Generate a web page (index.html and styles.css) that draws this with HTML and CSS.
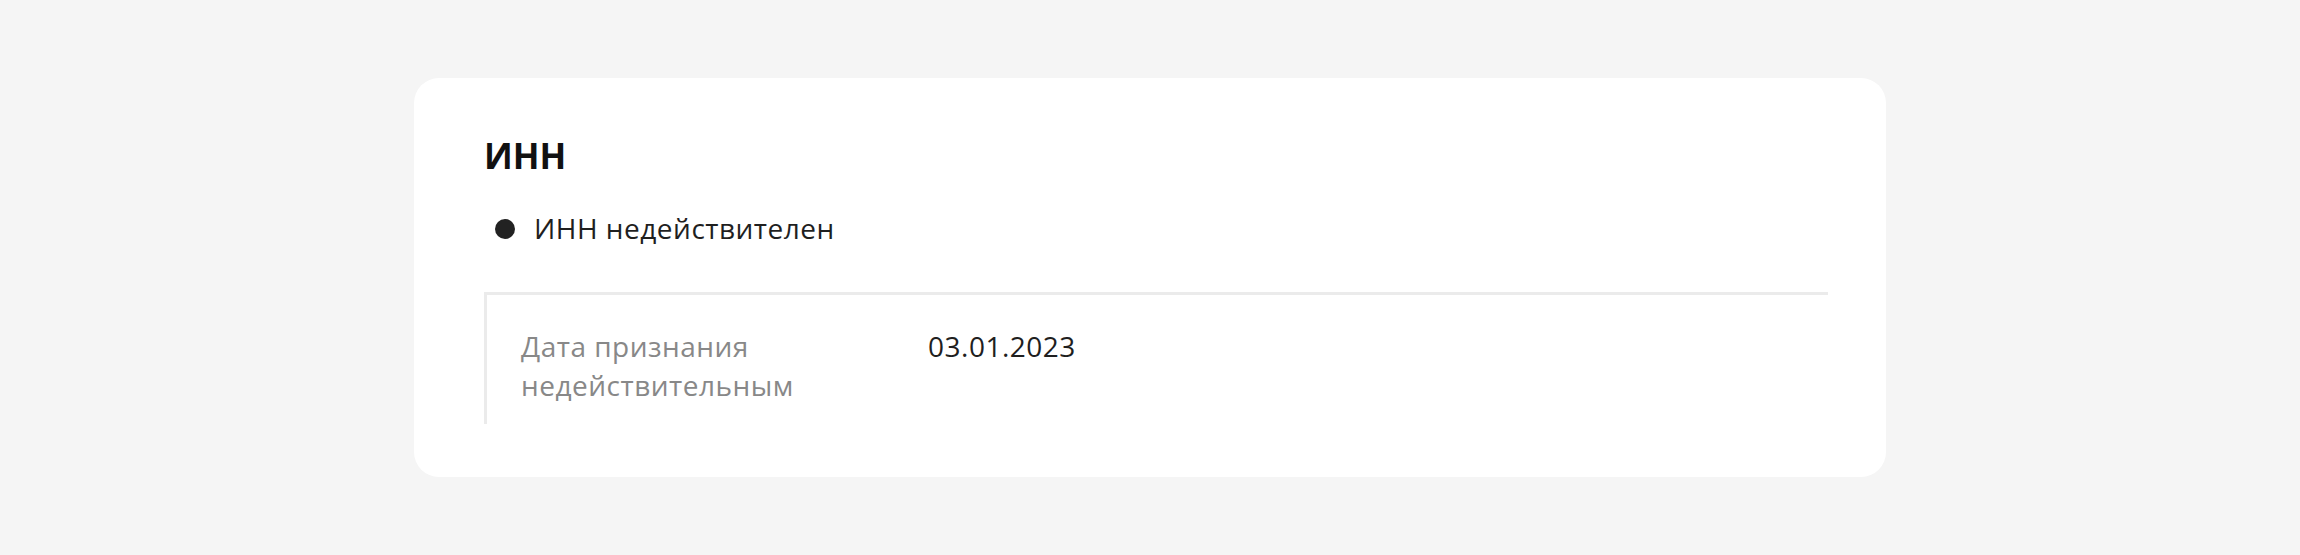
FILE: index.html
```html
<!DOCTYPE html>
<html lang="ru">
<head>
<meta charset="utf-8">
<title>ИНН</title>
<link rel="stylesheet" href="styles.css">
</head>
<body>
<section class="card">
  <h2 class="card-title">ИНН</h2>
  <ul class="status-list">
    <li class="status-item"><span class="status-dot"></span><span class="status-text">ИНН недействителен</span></li>
  </ul>
  <div class="details">
    <div class="details-row">
      <div class="details-label">Дата признания недействительным</div>
      <div class="details-value">03.01.2023</div>
    </div>
  </div>
</section>
</body>
</html>
```

FILE: styles.css
```css
html, body {
  margin: 0;
  padding: 0;
}
body {
  background: #f5f5f5;
  height: 100vh;
  display: flex;
  align-items: center;
  justify-content: center;
  font-family: "Open Sans", "Noto Sans", sans-serif;
  color: #1f1f1f;
}
.card {
  box-sizing: border-box;
  width: 1472px;
  background: #ffffff;
  border-radius: 25px;
  padding: 54px 58px 53px 70px;
}
.card-title {
  margin: 0;
  font-size: 35px;
  line-height: 48px;
  font-weight: 700;
  color: #111111;
}
.status-list {
  list-style: none;
  margin: 29px 0 0;
  padding: 0;
}
.status-item {
  display: flex;
  align-items: center;
  font-size: 28px;
  line-height: 39px;
  letter-spacing: 0.5px;
}
.status-dot {
  width: 20px;
  height: 20px;
  border-radius: 50%;
  background: #222222;
  margin-left: 11px;
  margin-right: 19px;
  flex: none;
}
.details {
  margin-top: 44px;
  border-top: 3px solid #ebebeb;
  border-left: 3px solid #ebebeb;
  padding: 32px 0 19px 34px;
}
.details-row {
  display: grid;
  grid-template-columns: 380px 1fr;
  column-gap: 27px;
  font-size: 28px;
  line-height: 39px;
  letter-spacing: 0.5px;
}
.details-label {
  color: #888888;
}
.details-value {
  color: #1f1f1f;
}
```
